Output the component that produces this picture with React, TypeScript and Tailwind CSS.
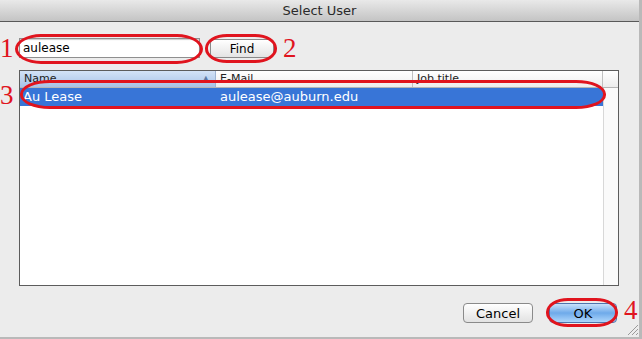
import React from "react";

const font = { fontFamily: '"DejaVu Sans", "Liberation Sans", sans-serif' };

function Ring({ className }: { className: string }) {
  return <div className={`absolute border-[3px] border-[#e0141e] ${className}`} />;
}

function Num({ n, className }: { n: string; className: string }) {
  return (
    <span
      className={`absolute text-[27px] leading-none text-[#e0141e] ${className}`}
      style={{ fontFamily: '"Liberation Serif", serif' }}
    >
      {n}
    </span>
  );
}

export default function App() {
  return (
    <div className="relative h-[339px] w-[642px] overflow-hidden bg-[#b9b9b9]" style={font}>
      <div className="flex h-[337px] w-[639px] flex-col bg-[#ececec]">
        {/* title bar */}
        <div className="flex h-[22px] shrink-0 items-center justify-center border-b border-[#595959] bg-gradient-to-b from-[#e9e9e9] to-[#c4c4c4] text-[13px] text-[#2a2a2a]">
          Select User
        </div>

        {/* search row */}
        <div className="mt-[16px] flex items-center pl-[19px]">
          <div className="flex h-[20px] w-[181px] items-center border border-[#8f8f8f] bg-white pl-[3px] text-[12px] text-black shadow-[inset_0_1px_1px_rgba(0,0,0,0.2)]">
            aulease
          </div>
          <button className="ml-[10px] h-[19px] w-[64px] rounded-[4px] border border-[#8a8a8a] bg-gradient-to-b from-white to-[#e4e4e4] text-[12px] text-black">
            Find
          </button>
        </div>

        {/* table */}
        <div className="ml-[19px] mt-[12px] flex h-[216px] w-[600px] flex-col border border-[#5c5c5c] bg-white">
          <div className="flex h-[17px] shrink-0 border-b border-[#b5b5b5] text-[11px] text-[#222]">
            <div className="flex w-[196px] items-center justify-between border-r border-[#9db4d3] bg-gradient-to-b from-[#d3e3f7] to-[#a7c3e8] pl-[4px] pr-[6px]">
              <span>Name</span>
              <span className="text-[8px] text-[#5c79a3]">▲</span>
            </div>
            <div className="flex w-[197px] items-center border-r border-[#c0c0c0] bg-gradient-to-b from-white to-[#ededed] pl-[4px]">
              E-Mail
            </div>
            <div className="flex w-[190px] items-center border-r border-[#c0c0c0] bg-gradient-to-b from-white to-[#ededed] pl-[4px]">
              Job title
            </div>
            <div className="flex-1 bg-gradient-to-b from-white to-[#ededed]" />
          </div>
          <div className="flex flex-1">
            <div className="flex-1">
              <div className="flex h-[18px] items-center bg-[#3875d7] text-[13px] text-white">
                <span className="w-[196px] pl-[3px]">Au Lease</span>
                <span className="pl-[4px]">aulease@auburn.edu</span>
              </div>
            </div>
            <div className="w-[15px] border-l border-[#d8d8d8] bg-[#fafafa]" />
          </div>
        </div>

        {/* buttons */}
        <div className="mt-[17px] flex justify-end gap-[16px] pr-[22px]">
          <button className="h-[20px] w-[70px] rounded-[4px] border border-[#8a8a8a] bg-gradient-to-b from-white to-[#e2e2e2] text-[13px] text-black">
            Cancel
          </button>
          <button className="h-[20px] w-[68px] rounded-[4px] border border-[#4f74ad] bg-gradient-to-b from-[#c8e1fa] via-[#6eaaea] to-[#aed6fb] text-[13px] text-black">
            OK
          </button>
        </div>
      </div>

      {/* resize grip */}
      <svg className="absolute left-[625px] top-[322px]" width="14" height="14" viewBox="0 0 14 14">
        <path d="M13 3 L3 13 M13 7 L7 13 M13 11 L11 13" stroke="#9a9a9a" strokeWidth="1" />
      </svg>

      {/* annotations */}
      <Ring className="left-[15px] top-[34px] h-[30px] w-[188px] rounded-[26px/15px]" />
      <Num n="1" className="left-[0px] top-[35px]" />
      <Ring className="left-[205px] top-[34px] h-[29px] w-[72px] rounded-[22px/14px]" />
      <Num n="2" className="left-[283px] top-[35px]" />
      <Ring className="left-[20px] top-[80px] h-[29px] w-[586px] rounded-[30px/14px]" />
      <Num n="3" className="left-[0px] top-[82px]" />
      <Ring className="left-[546px] top-[298px] h-[29px] w-[72px] rounded-[22px/14px]" />
      <Num n="4" className="left-[624px] top-[297px]" />
    </div>
  );
}
